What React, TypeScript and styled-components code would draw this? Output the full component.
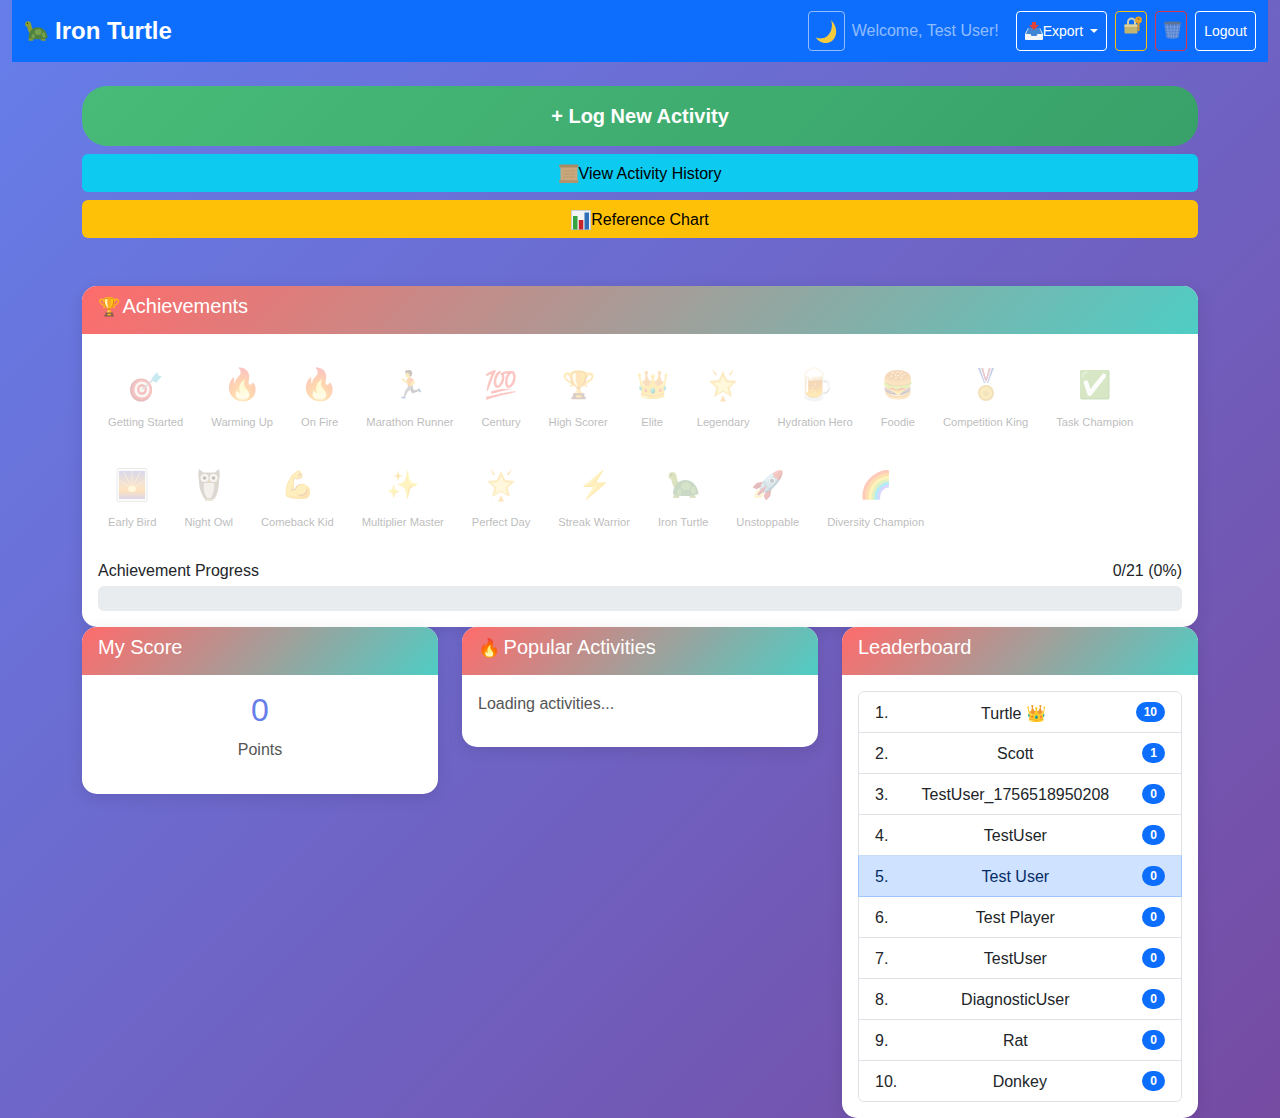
import React from "react";
import styled, { createGlobalStyle } from "styled-components";

const GlobalStyle = createGlobalStyle`
  * { box-sizing: border-box; }
  html, body { margin: 0; padding: 0; }
  body {
    font-family: "Liberation Sans", Arial, sans-serif;
    font-size: 16px;
    line-height: 1.5;
    color: #212529;
    min-height: 1118px;
    background: linear-gradient(135deg, #667eea 0%, #764ba2 100%);
  }
`;

const Page = styled.div`
  height: 1118px;
  overflow: hidden;
`;

const NavBar = styled.nav`
  margin: 0 12px;
  height: 62px;
  padding: 0 12px;
  background: #0d6efd;
  display: flex;
  align-items: center;
  justify-content: space-between;
`;

const Brand = styled.div`
  display: flex;
  align-items: center;
  gap: 7px;
  font-size: 24px;
  font-weight: 700;
  color: #fff;
`;

const NavActions = styled.div`
  display: flex;
  align-items: center;
  gap: 8px;
`;

const NavButton = styled.button<{ $border?: string; $width?: number }>`
  height: 40px;
  padding: 0 8px;
  ${(p) => (p.$width ? `width: ${p.$width}px;` : "")}
  background: transparent;
  border: 1px solid ${(p) => p.$border || "#fff"};
  border-radius: 4px;
  color: #fff;
  font: 14px "Liberation Sans", Arial, sans-serif;
  display: flex;
  align-items: center;
  flex: none;
`;

const MoonButton = styled(NavButton)`
  width: 37px;
  padding: 0 6px;
  justify-content: center;
`;

const LockIcon = styled.svg`
  flex: none;
  margin-top: -12px;
`;

const TrashIcon = styled.svg`
  flex: none;
  margin-top: -2px;
  margin-left: -1px;
`;

const Welcome = styled.span`
  color: rgba(255, 255, 255, 0.55);
  font-size: 16px;
  margin: 0 9px 0 -1px;
`;

const Caret = styled.span`
  margin-left: 7px;
  border-top: 4px solid #fff;
  border-left: 4px solid transparent;
  border-right: 4px solid transparent;
`;

const Main = styled.main`
  width: 1116px;
  margin: 24px auto 0;
`;

const LogButton = styled.button`
  display: block;
  width: 100%;
  height: 60px;
  border: none;
  border-radius: 25px;
  background: linear-gradient(135deg, #48bb78, #38a169);
  color: #fff;
  font: 700 20px "Liberation Sans", Arial, sans-serif;
  margin-bottom: 8px;
`;

const WideButton = styled.button<{ $bg: string }>`
  display: flex;
  align-items: center;
  justify-content: center;
  width: 100%;
  height: 38px;
  padding: 2px 0 0;
  border: none;
  border-radius: 6px;
  background: ${(p) => p.$bg};
  color: #000;
  font: 16px "Liberation Sans", Arial, sans-serif;
  margin-bottom: 8px;
`;

const Card = styled.section`
  background: #fff;
  border-radius: 15px;
  overflow: hidden;
  box-shadow: 0 4px 16px rgba(0, 0, 0, 0.1);
`;

const CardHead = styled.h2`
  margin: 0;
  height: 48px;
  padding: 8px 16px 0;
  font-size: 20px;
  line-height: 24px;
  font-weight: 400;
  color: #fff;
  background: linear-gradient(135deg, #ff6b6b, #4ecdc4);
`;

const HeadEmoji = styled.span`
  font-size: 18px;
  margin-right: -2px;
`;

const AchievementCard = styled(Card)`
  margin-top: 48px;
`;

const CardBody = styled.div`
  padding: 16px;
`;

const AchievementGrid = styled.div`
  display: flex;
  flex-wrap: wrap;
  gap: 8px;
  margin-bottom: 16px;
`;

const Achievement = styled.div`
  padding: 10px;
  height: 92px;
  text-align: center;
  opacity: 0.3;
`;

const AchievementIcon = styled.div`
  height: 46px;
  padding-top: 4px;
  font-size: 26.9px;
  line-height: 42px;
  margin-bottom: 8px;
  display: flex;
  align-items: center;
  justify-content: center;
`;

// flames and the beer mug are narrow glyphs, drawn larger inside the same 32px slot
const BigEmoji = styled.span`
  font-size: 31px;
  margin: 0 -2.4px;
`;

const AchievementName = styled.div`
  font-size: 11.2px;
  line-height: 16px;
  color: #222;
`;

const ProgressRow = styled.div`
  display: flex;
  justify-content: space-between;
  padding-top: 1px;
  margin-bottom: 3px;
`;

const ProgressTrack = styled.div`
  height: 25px;
  background: #e9ecef;
  border-radius: 6px;
`;

const Columns = styled.div`
  display: grid;
  grid-template-columns: repeat(3, 356px);
  gap: 24px;
  align-items: start;
`;

const ScoreBody = styled.div`
  padding: 16px;
  height: 119px;
  text-align: center;
`;

const ScoreValue = styled.div`
  font-size: 32px;
  line-height: 38px;
  color: #667eea;
  margin-bottom: 9px;
`;

const Muted = styled.div`
  color: #555;
`;

const PopularBody = styled.div`
  padding: 17px 16px 0;
  height: 72px;
  color: #555;
`;

const List = styled.ol`
  margin: 0;
  padding: 0;
  list-style: none;
`;

const ListRow = styled.li<{ $active?: boolean }>`
  position: relative;
  z-index: ${(p) => (p.$active ? 1 : 0)};
  height: 42px;
  margin-top: -1px;
  padding: 2px 16px 0;
  display: flex;
  align-items: center;
  justify-content: space-between;
  background: ${(p) => (p.$active ? "#cfe2ff" : "#fff")};
  color: ${(p) => (p.$active ? "#052c65" : "#212529")};
  border: 1px solid ${(p) => (p.$active ? "#9ec5fe" : "#dee2e6")};
  ${(p) => (p.$active ? "border-top-color: #c9dcf6;" : "")}
  &:first-child { margin-top: 0; border-radius: 6px 6px 0 0; }
  &:last-child { border-radius: 0 0 6px 6px; }
`;

const PlayerName = styled.span`
  white-space: nowrap;
`;

const Crown = styled.span`
  font-size: 16.5px;
  margin-right: -4px;
`;

const Badge = styled.span`
  background: #0d6efd;
  color: #fff;
  font-size: 12px;
  font-weight: 700;
  line-height: 12px;
  padding: 4px 8px;
  margin-top: -2px;
  border-radius: 10px;
`;

const Turtle = ({ size }: { size: number }) => (
  <svg width={size} height={size} viewBox="0 0 32 32">
    <path d="M1.500 7c0-2.500 1.800-4 4-4s3.500 1.500 4 4c.5 3 1 5 3 8l-5 4C5 15 4.500 12 4.500 10.500 2.800 10 1.500 9 1.500 7z" fill="#8f9e30" />
    <path d="M7 24l-1 5h6l1-4zM22 25l1 4h6l-2-5z" fill="#8a9a35" />
    <path d="M6 25c0-8 5-14 12.500-14S31 18 31.500 25c-6 2.500-19 3-25.500 0z" fill="#4f8240" />
    <path d="M16 14l5-.8 3 3.800-2 4h-6l-2-4zM25.500 17l2.500 2 1 5-3.500 1-2-3.500zM12 19l2.500 3-1 4-4-1.500z" fill="#76a24d" />
    <circle cx="4.500" cy="5.800" r="0.9" fill="#2d3310" />
  </svg>
);

const MoonIcon = () => (
  <svg width="24" height="24" viewBox="0 0 24 24" style={{ flex: "none" }}>
    <path d="M17 1c6 6 7 14 2 20-3 3-8 4-12 2-2-1-4-2.500-5-4.500 4 2 9 1 12-2 4-4 5-10.500 3-15.500z" fill="#f5cb3e" />
    <path d="M17 1c2 5 1 11.500-3 15.500-3 3-8 4-12 2 1.500 1 5 1.500 8 .5 6-2 10-11 7-18z" fill="#f9dd78" />
  </svg>
);

const InboxIcon = () => (
  <svg width="18" height="18" viewBox="0 0 18 18" style={{ flex: "none" }}>
    <path d="M3 6h12l3 6v5a1 1 0 01-1 1H1a1 1 0 01-1-1v-5z" fill="#f4f7fa" />
    <path d="M3.500 6h11l2.500 6h-4.500l-1 2h-5l-1-2H1z" fill="#3f87d6" />
    <path d="M7 0h4v3h3l-5 5-5-5h3z" fill="#e0413b" />
  </svg>
);

const LockKey = () => (
  <LockIcon width="18" height="18" viewBox="0 0 18 18">
    <path d="M3 9V6a4.500 4.500 0 019 0v3H10V6a2.500 2.500 0 00-5 0v3z" fill="#cfcdb0" />
    <rect x="0.500" y="8.500" width="13" height="9" rx="1" fill="#c3b470" />
    <rect x="0.500" y="8.500" width="13" height="2.500" fill="#ddd29a" />
    <circle cx="14.500" cy="4" r="3.400" fill="#e6a52c" />
    <circle cx="14.500" cy="3" r="0.900" fill="#a26f14" />
    <rect x="13.500" y="6" width="2" height="9" fill="#dc981f" />
  </LockIcon>
);

const Trash = () => (
  <TrashIcon width="19" height="18" viewBox="0 0 19 18">
    <path d="M1 2h17l-2.500 15c-2.500 1-9.500 1-12 0z" fill="#4f7fcf" />
    <path d="M4 3l2 14M7.500 3l1 14.500M11.500 3l-1 14.500M15 3l-2 14M2 6h15M2.500 9h14M3 12h13M3.500 15h12" stroke="#86a8df" strokeWidth="0.7" fill="none" />
    <ellipse cx="9.500" cy="2" rx="8.800" ry="1.600" fill="#5f7390" />
  </TrashIcon>
);

const Scroll = () => (
  <svg width="20" height="20" viewBox="0 0 20 20" style={{ flex: "none" }}>
    <rect x="1.500" y="2" width="17" height="16" fill="#c9a87e" />
    <rect x="0" y="0.500" width="19.500" height="3" rx="1.500" fill="#a98a63" />
    <rect x="0" y="16" width="19.500" height="3" rx="1.500" fill="#b4946c" />
    <path d="M4 7h12M4 10h12M4 13h12" stroke="#bb9a70" strokeWidth="1" />
  </svg>
);

const ChartIcon = () => (
  <svg width="20" height="20" viewBox="0 0 20 20" style={{ flex: "none" }}>
    <rect x="0.500" y="0.500" width="19" height="19" fill="#f2f3f4" stroke="#c9ccd0" />
    <rect x="2" y="6" width="4.500" height="13.500" fill="#35a340" />
    <rect x="7.800" y="10" width="4.500" height="9.500" fill="#c9242b" />
    <rect x="13.500" y="2.500" width="4.500" height="17" fill="#2f6fb8" />
  </svg>
);

const TargetIcon = () => (
  <svg width="32" height="34" viewBox="0 0 32 34">
    <ellipse cx="11" cy="22" rx="11" ry="11.500" fill="#b0282a" />
    <ellipse cx="12" cy="21.500" rx="10" ry="10.500" fill="#e0403c" />
    <ellipse cx="12" cy="21.500" rx="7.500" ry="8" fill="#f4ece4" />
    <ellipse cx="12" cy="21.500" rx="5" ry="5.500" fill="#e0403c" />
    <ellipse cx="12" cy="21.500" rx="2.500" ry="2.800" fill="#f4ece4" />
    <path d="M12 21.500L24 11" stroke="#8f8f8f" strokeWidth="1.400" />
    <path d="M21 11l6-7 1.500 3.500L32 8l-6 7z" fill="#4fb7cf" />
  </svg>
);

const GlowStar = () => (
  <svg width="32" height="34" viewBox="0 0 32 34">
    <path d="M16 3l4.200 9 9.800 1-7.200 6.800 2.200 9.200-9-5-9 5 2.200-9.200L2 13l9.800-1z" fill="#f9c23c" />
    <path d="M16 8l2.800 6.300 6.700.7-5 4.600 1.500 6.300-6-3.400-6 3.400 1.500-6.300-5-4.600 6.700-.7z" fill="#ffe98a" />
    <path d="M5 1l5 5-1.500 1.500zM27 1l-5 5 1.500 1.500zM16 27.500l3 6h-6z" fill="#f6a623" />
  </svg>
);

const MedalIcon = () => (
  <svg width="32" height="34" viewBox="0 0 32 34">
    <path d="M8 0h5l4 15h-3zM24 0h-5l-4 15h3z" fill="#3f5fae" />
    <path d="M10 0h1.500l4 14h-1zM22 0h-1.500l-4 14h1z" fill="#e8e8f2" />
    <path d="M13 0h-1.500l4 13h1zM19 0h1.500l-4 13h-1z" fill="#d9413c" />
    <circle cx="16" cy="25" r="8" fill="#d79a1d" />
    <circle cx="16" cy="25" r="6" fill="#f4c63c" />
    <path d="M16 20.500l1.400 2.900 3.100.400-2.300 2.200.600 3.100-2.800-1.500-2.800 1.500.600-3.100-2.300-2.200 3.100-.400z" fill="#dda828" />
  </svg>
);

const SunriseIcon = () => (
  <svg width="32" height="34" viewBox="0 0 32 34">
    <defs>
      <linearGradient id="sky" x1="0" y1="0" x2="0" y2="1">
        <stop offset="0" stopColor="#7b7fc0" />
        <stop offset="0.6" stopColor="#f7a545" />
        <stop offset="0.72" stopColor="#f79a2a" />
        <stop offset="1" stopColor="#8a78b8" />
      </linearGradient>
    </defs>
    <rect x="1" y="0.500" width="30" height="33" rx="1" fill="#f1f1f1" stroke="#bdbdbd" />
    <rect x="3" y="3" width="26" height="28" fill="url(#sky)" />
    <path d="M16 21L8 4M16 21L24 4M16 21L3 12M16 21L29 12M16 21V3" stroke="#ffd98a" strokeWidth="1" opacity="0.7" />
    <ellipse cx="16" cy="21" rx="4" ry="3" fill="#ffe88a" />
  </svg>
);

const OwlIcon = () => (
  <svg width="32" height="34" viewBox="0 0 32 34">
    <path d="M6 1l4.500 3.500h11L26 1c1 4 1 8 0 11 0 9-2 16-5 19h-9C9 28 6 21 6 12c-1-3-1-7 0-11z" fill="#8b7a66" />
    <path d="M11 15h10c1 6-1 11-3 15h-4c-2-3-4-9-3-15z" fill="#d9cfc0" />
    <circle cx="11.500" cy="10" r="4" fill="#e7dfd0" />
    <circle cx="20.500" cy="10" r="4" fill="#e7dfd0" />
    <circle cx="11.500" cy="10" r="1.800" fill="#3a3228" />
    <circle cx="20.500" cy="10" r="1.800" fill="#3a3228" />
    <path d="M15 12h2l-1 3z" fill="#c58a2a" />
    <path d="M12 32h8" stroke="#a88b5c" strokeWidth="1.500" />
  </svg>
);

const achievements: [React.ReactNode, string][] = [
  [<TargetIcon />, "Getting Started"], [<BigEmoji>🔥</BigEmoji>, "Warming Up"], [<BigEmoji>🔥</BigEmoji>, "On Fire"], ["🏃", "Marathon Runner"],
  ["💯", "Century"], ["🏆", "High Scorer"], ["👑", "Elite"], [<GlowStar />, "Legendary"],
  [<BigEmoji>🍺</BigEmoji>, "Hydration Hero"], ["🍔", "Foodie"], [<MedalIcon />, "Competition King"], ["✅", "Task Champion"],
  [<SunriseIcon />, "Early Bird"], [<OwlIcon />, "Night Owl"], ["💪", "Comeback Kid"], ["✨", "Multiplier Master"],
  [<GlowStar />, "Perfect Day"], ["⚡", "Streak Warrior"], [<Turtle size={32} />, "Iron Turtle"], ["🚀", "Unstoppable"],
  ["🌈", "Diversity Champion"],
];

const leaders = [
  ["Turtle", 10], ["Scott", 1], ["TestUser_1756518950208", 0], ["TestUser", 0], ["Test User", 0],
  ["Test Player", 0], ["TestUser", 0], ["DiagnosticUser", 0], ["Rat", 0], ["Donkey", 0],
] as const;

export default function App() {
  return (
    <Page>
      <GlobalStyle />
      <NavBar>
        <Brand><Turtle size={24} />Iron Turtle</Brand>
        <NavActions>
          <MoonButton $border="rgba(255,255,255,.55)"><MoonIcon /></MoonButton>
          <Welcome>Welcome, Test User!</Welcome>
          <NavButton><InboxIcon />Export<Caret /></NavButton>
          <NavButton $border="#ffc107" $width={32}><LockKey /></NavButton>
          <NavButton $border="#dc3545" $width={32}><Trash /></NavButton>
          <NavButton>Logout</NavButton>
        </NavActions>
      </NavBar>
      <Main>
        <LogButton>+ Log New Activity</LogButton>
        <WideButton $bg="#0dcaf0"><Scroll />View Activity History</WideButton>
        <WideButton $bg="#ffc107"><ChartIcon />Reference Chart</WideButton>
        <AchievementCard>
          <CardHead><HeadEmoji>🏆</HeadEmoji> Achievements</CardHead>
          <CardBody>
            <AchievementGrid>
              {achievements.map(([icon, name]) => (
                <Achievement key={name}>
                  <AchievementIcon>{icon}</AchievementIcon>
                  <AchievementName>{name}</AchievementName>
                </Achievement>
              ))}
            </AchievementGrid>
            <ProgressRow><span>Achievement Progress</span><span>0/21 (0%)</span></ProgressRow>
            <ProgressTrack />
          </CardBody>
        </AchievementCard>
        <Columns>
          <Card>
            <CardHead>My Score</CardHead>
            <ScoreBody>
              <ScoreValue>0</ScoreValue>
              <Muted>Points</Muted>
            </ScoreBody>
          </Card>
          <Card>
            <CardHead><HeadEmoji>🔥</HeadEmoji> Popular Activities</CardHead>
            <PopularBody>Loading activities...</PopularBody>
          </Card>
          <Card>
            <CardHead>Leaderboard</CardHead>
            <CardBody>
              <List>
                {leaders.map(([name, score], i) => (
                  <ListRow key={i} $active={i === 4}>
                    <span>{i + 1}.</span>
                    <PlayerName>{name}{i === 0 && <> <Crown>👑</Crown></>}</PlayerName>
                    <Badge>{score}</Badge>
                  </ListRow>
                ))}
              </List>
            </CardBody>
          </Card>
        </Columns>
      </Main>
    </Page>
  );
}
